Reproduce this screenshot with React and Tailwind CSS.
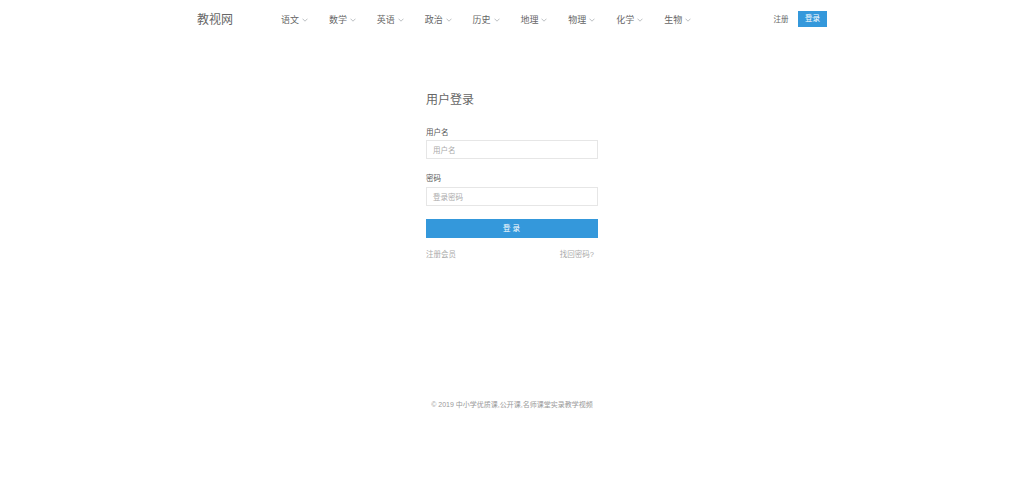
import React from "react";

const subjects = ["语文", "数学", "英语", "政治", "历史", "地理", "物理", "化学", "生物"];

function Chevron() {
  return (
    <svg width="6" height="4" viewBox="0 0 6 4" fill="none" className="ml-[3px]">
      <path d="M0.5 0.7 L3 3.2 L5.5 0.7" stroke="#8f959b" strokeWidth="0.6" />
    </svg>
  );
}

export default function App() {
  return (
    <div className="min-h-[485px] bg-white opacity-[0.995] font-['Liberation_Sans','Noto_Sans_CJK_SC',sans-serif] flex flex-col items-center">
      <header className="w-[630px] h-[40px] flex items-center">
        <div className="w-[84px] text-[12px] text-[#666] leading-none">教视网</div>
        <nav className="flex flex-1">
          {subjects.map((s) => (
            <a key={s} className="w-[47.9px] flex items-center text-[9px] leading-none text-[#666]">
              {s}
              <Chevron />
            </a>
          ))}
        </nav>
        <a className="text-[7.5px] text-[#666] leading-none mr-[9.5px]">注册</a>
        <a className="w-[29px] h-[16px] mb-[2px] bg-[#3498db] text-white text-[7.5px] leading-none flex items-center justify-center">登录</a>
      </header>

      <main className="w-[172px] mt-[52px] flex flex-col">
        <h1 className="text-[12px] leading-[16px] font-normal text-[#666]">用户登录</h1>
        <label className="mt-[20px] text-[7.5px] leading-[10px] text-[#555]">用户名</label>
        <div className="mt-[2px] h-[19px] border border-[#e6e6e6] px-[6px] pt-[2px] flex items-center text-[7.5px] text-[#aaa]">用户名</div>
        <label className="mt-[15px] text-[7.5px] leading-[10px] text-[#555]">密码</label>
        <div className="mt-[3px] h-[19px] border border-[#e6e6e6] px-[6px] pt-[2px] flex items-center text-[7.5px] text-[#aaa]">登录密码</div>
        <button className="mt-[13px] h-[19px] bg-[#3498db] text-white text-[7.5px] leading-none tracking-[2px] pl-[1px]">登录</button>
        <div className="mt-[12px] flex justify-between pr-[4px] text-[7.5px] leading-[10px] text-[#aaa]">
          <a>注册会员</a>
          <a>找回密码?</a>
        </div>
      </main>

      <footer className="mt-[140px] text-[7px] leading-[10px] text-[#999]">© 2019 中小学优质课,公开课,名师课堂实录教学视频</footer>
    </div>
  );
}
